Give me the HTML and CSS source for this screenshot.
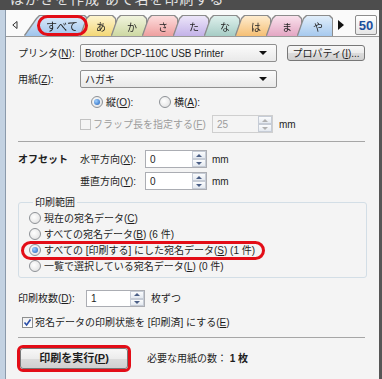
FILE: index.html
```html
<!DOCTYPE html>
<html>

<head>
    <meta charset="utf-8">
    <title>はがき印刷</title>
    <link rel="stylesheet" href="styles.css">
</head>

<body>
    <div class="window">
        <div class="titlebar"><span class="title-text">はがきを作成 あて名を印刷する</span></div>
        <div class="frame">
            <div class="frame-left"></div>
            <div class="main">
                <div class="tabstrip">
                    <span class="tab-prev">
                        <svg width="6" height="8" viewBox="0 0 6 8"><polygon points="5,0.5 5,7.5 0.8,4" fill="none" stroke="#333" stroke-width="1"/></svg>
                    </span>
                    <div class="tab tab-all"><div class="tab-face">すべて</div></div>
                    <div class="tab tab-a"><div class="tab-face">あ</div></div>
                    <div class="tab tab-ka"><div class="tab-face">か</div></div>
                    <div class="tab tab-sa"><div class="tab-face">さ</div></div>
                    <div class="tab tab-ta"><div class="tab-face">た</div></div>
                    <div class="tab tab-na"><div class="tab-face">な</div></div>
                    <div class="tab tab-ha"><div class="tab-face">は</div></div>
                    <div class="tab tab-ma"><div class="tab-face">ま</div></div>
                    <div class="tab tab-ya"><div class="tab-face">や</div></div>
                    <span class="tab-next">
                        <svg width="6" height="10" viewBox="0 0 6 10"><polygon points="0,0 6,5 0,10" fill="#111"/></svg>
                    </span>
                    <div class="tab-50">50</div>
                    <div class="mark mark-tab"></div>
                </div>

                <div class="content">
                    <div class="row row-printer">
                        <span class="lbl">プリンタ(<u>N</u>):</span>
                        <div class="select">
                            <span class="select-val">Brother DCP-110C USB Printer</span>
                            <span class="select-arrow"></span>
                        </div>
                        <div class="btn btn-props">プロパティ(<u>I</u>)...</div>
                    </div>

                    <div class="row row-paper">
                        <span class="lbl">用紙(<u>Z</u>):</span>
                        <div class="select">
                            <span class="select-val">ハガキ</span>
                            <span class="select-arrow"></span>
                        </div>
                    </div>

                    <div class="row row-orient">
                        <div class="radio-item orient-item">
                            <span class="radio on"></span><span>縦(<u>O</u>):</span>
                        </div>
                        <div class="radio-item">
                            <span class="radio"></span><span>横(<u>A</u>):</span>
                        </div>
                    </div>

                    <div class="row row-flap">
                        <div class="check-item flap-item disabled">
                            <span class="check"></span><span>フラップ長を指定する(<u>F</u>)</span>
                        </div>
                        <div class="spin spin-flap disabled">
                            <span class="spin-val">25</span>
                            <span class="spin-btns"><span class="spin-up"></span><span class="spin-dn"></span></span>
                        </div>
                        <span class="unit">mm</span>
                    </div>

                    <div class="sep sep-top"></div>

                    <div class="row row-offset">
                        <span class="lbl bold">オフセット</span>
                        <span class="sublbl">水平方向(<u>X</u>):</span>
                        <div class="spin spin-off">
                            <span class="spin-val">0</span>
                            <span class="spin-btns"><span class="spin-up"></span><span class="spin-dn"></span></span>
                        </div>
                        <span class="unit unit-off">mm</span>
                    </div>

                    <div class="row row-offset2">
                        <span class="sublbl">垂直方向(<u>Y</u>):</span>
                        <div class="spin spin-off">
                            <span class="spin-val">0</span>
                            <span class="spin-btns"><span class="spin-up"></span><span class="spin-dn"></span></span>
                        </div>
                        <span class="unit unit-off">mm</span>
                    </div>

                    <fieldset class="group">
                        <legend>印刷範囲</legend>
                        <div class="radio-item range-item">
                            <span class="radio"></span><span>現在の宛名データ(<u>C</u>)</span>
                        </div>
                        <div class="radio-item range-item">
                            <span class="radio"></span><span>すべての宛名データ(<u>B</u>) (6 件)</span>
                        </div>
                        <div class="radio-item range-item">
                            <span class="radio on"></span><span class="focus">すべての [印刷する] にした宛名データ(<u>S</u>) (1 件)</span>
                            <div class="mark mark-range"></div>
                        </div>
                        <div class="radio-item range-item">
                            <span class="radio"></span><span>一覧で選択している宛名データ(<u>L</u>) (0 件)</span>
                        </div>
                    </fieldset>

                    <div class="row row-copies">
                        <span class="lbl-copies">印刷枚数(<u>D</u>):</span>
                        <div class="spin spin-copies">
                            <span class="spin-val">1</span>
                            <span class="spin-btns"><span class="spin-up"></span><span class="spin-dn"></span></span>
                        </div>
                        <span class="unit">枚ずつ</span>
                    </div>

                    <div class="row row-status">
                        <div class="check-item">
                            <span class="check on">
                                <svg width="9" height="9" viewBox="0 0 9 9"><polyline points="1.5,4.5 3.6,7 7.5,1.5" fill="none" stroke="#2b4fa8" stroke-width="1.6"/></svg>
                            </span>
                            <span>宛名データの印刷状態を [印刷済] にする(<u>E</u>)</span>
                        </div>
                    </div>

                    <div class="sep sep-bottom"></div>

                    <div class="row row-run">
                        <div class="run-mark">
                            <div class="btn btn-run">印刷を実行(<u>P</u>)</div>
                        </div>
                        <span class="need">必要な用紙の数： <b>1 枚</b></span>
                    </div>
                </div>
            </div>
            <div class="frame-right"></div>
        </div>
    </div>
</body>

</html>
```

FILE: styles.css
```css
body {
    margin: 0;
    font-family: "Liberation Sans", "Noto Sans CJK JP", sans-serif;
    font-size: 10px;
    color: #1e1e1e;
}

u {
    text-decoration: underline;
}

.bold {
    font-weight: bold;
}

.window {
    width: 382px;
    height: 379px;
    overflow: hidden;
    background: #f4f4f4;
}

.titlebar {
    height: 10px;
    background: #4d4d4d;
    overflow: hidden;
}

.title-text {
    display: block;
    margin-top: -9px;
    padding-left: 10px;
    font-size: 14px;
    line-height: 16px;
    color: #e4e4e4;
    letter-spacing: 1px;
    white-space: nowrap;
}

.frame {
    display: flex;
    height: 369px;
}

.frame-left {
    width: 5px;
    background: #c3d2e2;
    border-right: 1px solid #8b9aab;
}

.frame-right {
    width: 3px;
    background: #565656;
}

.main {
    flex: 1;
    display: flex;
    flex-direction: column;
}

/* index tabs */

.tabstrip {
    position: relative;
    display: flex;
    align-items: flex-end;
    height: 26px;
    background: #fafafa;
    border-bottom: 1px solid #9a9a9a;
}

.tab-prev {
    display: flex;
    align-self: center;
    width: 13px;
    padding-left: 6px;
    margin-top: 4px;
    flex-shrink: 0;
}

.tab {
    filter: drop-shadow(1px 0 0 #8c8c8c) drop-shadow(-1px 0 0 #8c8c8c) drop-shadow(0 -1px 0 #8c8c8c);
    margin-left: -3px;
    flex-shrink: 0;
}

.tab-face {
    display: flex;
    align-items: center;
    justify-content: center;
    box-sizing: border-box;
    width: 34px;
    height: 20px;
    padding-left: 6px;
    font-size: 10px;
    color: #222;
    clip-path: polygon(0 100%, 6px 3px, 9px 0, calc(100% - 3px) 0, 100% 3px, 100% 100%);
}

.tab-all {
    margin-left: 0;
}

.tab-all .tab-face {
    width: 62px;
    padding-left: 12px;
    font-size: 11px;
    clip-path: polygon(0 100%, 12px 3px, 15px 0, calc(100% - 3px) 0, 100% 3px, 100% 100%);
    background: linear-gradient(#dbeafa, #9fc4ec);
}

.tab-a {
    margin-left: -6px;
}

.tab-a .tab-face { background: linear-gradient(#fdf5cf, #f3d775); }
.tab-ka .tab-face { background: linear-gradient(#f1f4de, #cdd8a2); }
.tab-sa .tab-face { background: linear-gradient(#fcdcdc, #ee9f9f); }
.tab-ta .tab-face { background: linear-gradient(#ece5f9, #c3b2e8); }
.tab-na .tab-face { background: linear-gradient(#def0ec, #a6ccc5); }
.tab-ha .tab-face { background: linear-gradient(#feecce, #f5bf74); }
.tab-ma .tab-face { background: linear-gradient(#f9e1ec, #e3a6c3); }
.tab-ya .tab-face { background: linear-gradient(#e1eefa, #a6c9ee); }

.tab-next {
    display: flex;
    align-self: center;
    margin-left: 6px;
    margin-top: 4px;
    flex-shrink: 0;
}

.tab-50 {
    display: flex;
    align-items: center;
    justify-content: center;
    box-sizing: border-box;
    width: 22px;
    height: 20px;
    margin-left: 11px;
    margin-bottom: 1px;
    border: 1px solid #8c8c8c;
    border-radius: 2px;
    background: linear-gradient(#ffffff, #e6e6e6);
    font-family: "Liberation Sans", sans-serif;
    font-weight: bold;
    font-size: 13px;
    color: #1b4f9e;
    flex-shrink: 0;
}

/* red annotation marks */

.mark {
    position: absolute;
    box-sizing: border-box;
    border: 3px solid #e30d17;
    pointer-events: none;
}

.mark-tab {
    left: 31px;
    top: 5px;
    width: 51px;
    height: 21px;
    border-radius: 11px;
}

.mark-range {
    left: -8px;
    top: -1px;
    width: 244px;
    height: 19px;
    border-radius: 10px;
}

/* form body */

.content {
    flex: 1;
    display: flex;
    flex-direction: column;
    padding: 7px 12px 0 12px;
    background: #f4f4f4;
}

.row {
    display: flex;
    align-items: center;
    line-height: 13px;
}

.lbl {
    width: 62px;
}

.select {
    display: flex;
    align-items: center;
    box-sizing: border-box;
    width: 197px;
    height: 18px;
    border: 1px solid #8f8f8f;
    border-radius: 2px;
    background: linear-gradient(#fbfbfb, #e9e9e9);
}

.select-val {
    flex: 1;
    padding-left: 4px;
}

.select-arrow {
    width: 0;
    height: 0;
    margin-right: 9px;
    border-left: 4px solid transparent;
    border-right: 4px solid transparent;
    border-top: 4px solid #111;
}

.btn {
    display: flex;
    align-items: center;
    justify-content: center;
    box-sizing: border-box;
    border: 1px solid #777;
    border-radius: 3px;
    background: linear-gradient(#f7f7f7 0%, #ececec 50%, #dcdcdc 51%, #d0d0d0 100%);
}

.btn-props {
    width: 78px;
    height: 16px;
    margin-left: 10px;
}

.row-paper {
    margin-top: 8px;
}

.row-orient {
    margin-top: 7px;
    height: 14px;
    padding-left: 73px;
}

.radio-item {
    display: flex;
    align-items: center;
    gap: 3px;
}

.orient-item {
    width: 68px;
}

.radio {
    display: flex;
    align-items: center;
    justify-content: center;
    box-sizing: border-box;
    width: 12px;
    height: 12px;
    border: 1px solid #8d9196;
    border-radius: 50%;
    background: radial-gradient(circle at 40% 40%, #ffffff, #dcdcdc);
}

.radio.on::after {
    content: "";
    width: 6px;
    height: 6px;
    border-radius: 50%;
    background: radial-gradient(circle at 35% 35%, #9fd0ff, #1f5fb8);
}

.row-flap {
    margin-top: 6px;
    height: 18px;
    padding-left: 62px;
}

.check-item {
    display: flex;
    align-items: center;
    gap: 2px;
}

.flap-item {
    width: 132px;
}

.check {
    display: flex;
    align-items: center;
    justify-content: center;
    box-sizing: border-box;
    width: 11px;
    height: 11px;
    border: 1px solid #8e8f8f;
    background: linear-gradient(#f0f0f0, #ffffff);
}

.disabled {
    color: #9c9c9c;
}

.disabled .check {
    border-color: #c2c2c2;
    background: #f4f4f4;
}

.spin {
    display: flex;
    box-sizing: border-box;
    height: 18px;
    border: 1px solid #abadb3;
    background: #ffffff;
}

.spin.disabled {
    border-color: #cfcfcf;
    background: #f4f4f4;
}

.spin-val {
    flex: 1;
    display: flex;
    align-items: center;
    padding-left: 4px;
}

.spin-btns {
    display: flex;
    flex-direction: column;
    width: 14px;
}

.spin-up,
.spin-dn {
    flex: 1;
    display: flex;
    align-items: center;
    justify-content: center;
    border: 1px solid #c6ccd6;
    background: linear-gradient(#fbfcfd, #e4e9f0);
}

.spin-up::after {
    content: "";
    border-left: 3px solid transparent;
    border-right: 3px solid transparent;
    border-bottom: 3px solid #4b5f86;
}

.spin-dn::after {
    content: "";
    border-left: 3px solid transparent;
    border-right: 3px solid transparent;
    border-top: 3px solid #4b5f86;
}

.spin.disabled .spin-up::after {
    border-bottom-color: #b0b0b0;
}

.spin.disabled .spin-dn::after {
    border-top-color: #b0b0b0;
}

.spin-flap {
    width: 61px;
}

.unit {
    margin-left: 6px;
}

.sep {
    height: 1px;
    margin-right: 2px;
    background: #a6a6a6;
}

.sep-top {
    margin-top: 8px;
}

.row-offset {
    margin-top: 8px;
    height: 18px;
}

.row-offset2 {
    margin-top: 4px;
    height: 18px;
    padding-left: 62px;
}

.sublbl {
    width: 65px;
}

.spin-off {
    width: 62px;
}

.unit-off {
    margin-left: 5px;
}

/* range group */

.group {
    margin: 6px 0 0 0;
    padding: 1px 0 3px 10px;
    border: 1px solid #d3dee6;
    border-radius: 3px;
}

.group legend {
    margin-left: 4px;
    padding: 0 2px;
    line-height: 13px;
}

.range-item {
    position: relative;
    height: 16px;
    line-height: 13px;
}

.row-copies {
    margin-top: 12px;
    height: 17px;
}

.lbl-copies {
    width: 68px;
}

.spin-copies {
    width: 59px;
    height: 17px;
}

.row-status {
    margin-top: 8px;
    height: 14px;
    padding-left: 4px;
}

.sep-bottom {
    margin-top: 8px;
}

.row-run {
    margin-top: 7px;
}

.run-mark {
    margin-left: -1px;
    border: 3px solid #e30d17;
    border-radius: 6px;
}

.btn-run {
    width: 108px;
    height: 21px;
    font-weight: bold;
    font-size: 11px;
}

.need {
    margin-left: 16px;
}
```
